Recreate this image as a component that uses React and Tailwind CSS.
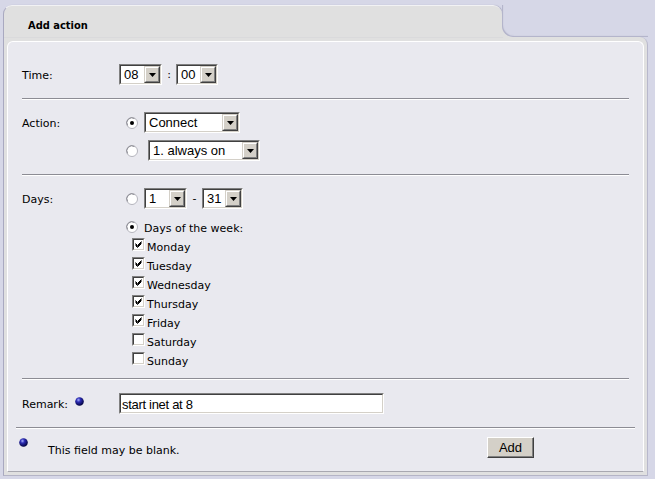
import React from 'react';

const label = "font-['DejaVu_Sans',Verdana,sans-serif] text-[11px] text-black";
const arial = "font-['Liberation_Sans',Arial,sans-serif] text-[13px] text-black";

// classic win98 drop-down arrow button
function ArrowButton() {
  return (
    <div className="flex h-[17px] w-[16px] border border-t-[#d4d0c8] border-l-[#d4d0c8] border-b-[#404040] border-r-[#404040]">
      <div className="flex flex-1 items-center justify-center bg-[#d4d0c8] border border-t-white border-l-white border-b-[#808080] border-r-[#808080]">
        <svg width="7" height="4" viewBox="0 0 7 4">
          <polygon points="0,0 7,0 3.5,4" fill="#000" />
        </svg>
      </div>
    </div>
  );
}

function Select({ value, w }) {
  return (
    <div className={`flex h-[21px] ${w} border border-t-[#808080] border-l-[#808080] border-b-white border-r-white`}>
      <div className="flex flex-1 bg-white border border-t-[#404040] border-l-[#404040] border-b-[#d4d0c8] border-r-[#d4d0c8]">
        <span className={`${arial} flex-1 pl-[3px] leading-[17px] whitespace-nowrap overflow-hidden`}>{value}</span>
        <ArrowButton />
      </div>
    </div>
  );
}

function Radio({ checked }) {
  return (
    <svg width="12" height="12" viewBox="0 0 12 12" className="shrink-0">
      <circle cx="6" cy="6" r="5.5" fill="#fff" stroke="#b4b4bc" strokeWidth="1" />
      <path d="M1.6 8.5 A5 5 0 0 1 8.5 1.6" fill="none" stroke="#8a8a92" strokeWidth="1" />
      {checked && <circle cx="6" cy="6" r="2" fill="#000" />}
    </svg>
  );
}

function Checkbox({ checked }) {
  return (
    <div className="h-[13px] w-[13px] shrink-0 border border-t-[#808080] border-l-[#808080] border-b-white border-r-white">
      <div className="h-full w-full bg-white border border-t-[#404040] border-l-[#404040] border-b-[#d4d0c8] border-r-[#d4d0c8]">
        {checked && (
          <svg width="9" height="9" viewBox="0 0 9 9" className="block">
            <path d="M1.5 3.5 L3.5 5.5 L7.5 1.5 M1.5 4.5 L3.5 6.5 L7.5 2.5 M1.5 5.5 L3.5 7.5 L7.5 3.5" fill="none" stroke="#000" strokeWidth="1" />
          </svg>
        )}
      </div>
    </div>
  );
}

function Bullet() {
  return (
    <svg width="9" height="9" viewBox="0 0 9 9" className="block shrink-0">
      <defs>
        <radialGradient id="ball" cx="38%" cy="32%" r="70%">
          <stop offset="0" stopColor="#a8b0ff" />
          <stop offset="0.35" stopColor="#2c2cb4" />
          <stop offset="1" stopColor="#00003a" />
        </radialGradient>
      </defs>
      <circle cx="4.5" cy="4.5" r="4.3" fill="url(#ball)" />
    </svg>
  );
}

function Rule({ wide }) {
  return <div className={`h-[2px] border-t border-t-[#8c8c94] border-b border-b-white ${wide ? 'mx-[-6px]' : ''}`} />;
}

const days = [
  ['Monday', true],
  ['Tuesday', true],
  ['Wednesday', true],
  ['Thursday', true],
  ['Friday', true],
  ['Saturday', false],
  ['Sunday', false],
];

export default function App() {
  return (
    <div className="w-[655px] h-[479px] overflow-hidden bg-[#d6d7e7] pt-[5px] pl-[3px]">
      <div className="w-[645px]">
        {/* ── Tab ─────────────────────────────────────── */}
        <div className="flex h-[32px]">
          <div className="w-[499px] rounded-t-[9px] bg-[#e0e0e0] border-t border-l border-t-[#f2f2f4] border-l-[#a9a9c0] shadow-[1px_0_1px_rgba(140,140,170,0.6)] pl-[24px] pt-[10px] leading-[14px]">
            <span className="font-['DejaVu_Sans_Condensed','DejaVu_Sans',sans-serif] text-[11px] font-bold leading-[14px] text-black">Add action</span>
          </div>
          <div className="flex-1 bg-[#e0e0e0]">
            <div className="h-full rounded-bl-[11px] bg-[#d6d7e7] shadow-[inset_1px_-1px_1px_rgba(140,140,170,0.5)]" />
          </div>
        </div>

        {/* ── Body ────────────────────────────────────── */}
        <div className="rounded-tr-[8px] bg-[#e0e0e0] border-l border-b border-r border-l-[#a9a9c0] border-b-[#b4b4c6] border-r-[#b8b8cc] px-[3px] pt-[4px] pb-[3px]">
          <div className="rounded-t-[6px] bg-[#e9e9ef] border-t border-l border-r border-t-white border-l-white border-r-white border-b border-b-[#a8a8b0] px-[14px] leading-[14px]">
            {/* Time */}
            <div className="flex pt-[22px] pb-[13px]">
              <div className={`${label} w-[97px] h-[21px] flex items-center pt-[2px]`}>Time:</div>
              <div className="flex items-center">
                <Select value="08" w="w-[43px]" />
                <span className={`${label} w-[14px] text-center`}>:</span>
                <Select value="00" w="w-[42px]" />
              </div>
            </div>
            <Rule />

            {/* Action */}
            <div className="flex pt-[12px] pb-[13px]">
              <div className={`${label} w-[97px] h-[21px] flex items-center pt-[2px]`}>Action:</div>
              <div className="flex flex-col gap-[7px]">
                <div className="flex items-center pl-[7px]">
                  <Radio checked />
                  <div className="ml-[6px]"><Select value="Connect" w="w-[96px]" /></div>
                </div>
                <div className="flex items-center pl-[7px]">
                  <Radio />
                  <div className="ml-[10px]"><Select value="1. always on" w="w-[112px]" /></div>
                </div>
              </div>
            </div>
            <Rule />

            {/* Days */}
            <div className="flex pt-[12px] pb-[8px]">
              <div className={`${label} w-[97px] h-[21px] flex items-center pt-[2px]`}>Days:</div>
              <div className="flex flex-col">
                <div className="flex items-center pl-[7px]">
                  <Radio />
                  <div className="ml-[6px]"><Select value="1" w="w-[43px]" /></div>
                  <span className={`${label} w-[15px] text-center`}>-</span>
                  <Select value="31" w="w-[41px]" />
                </div>
                <div className="flex items-center h-[20px] mt-[8px] pl-[7px]">
                  <Radio checked />
                  <span className={`${label} ml-[6px] leading-[14px] pt-[3px]`}>Days of the week:</span>
                </div>
                {days.map(([d, on]) => (
                  <div key={d} className="flex h-[19px] pl-[13px]">
                    <div className="mt-[1px]"><Checkbox checked={on} /></div>
                    <span className={`${label} ml-[2px] leading-[19px] pt-[1px]`}>{d}</span>
                  </div>
                ))}
              </div>
            </div>
            <Rule />

            {/* Remark */}
            <div className="flex pt-[13px] pb-[13px]">
              <div className={`${label} w-[97px] h-[21px] flex items-center pt-[2px]`}>
                Remark:
                <span className="ml-[7px] mt-[-6px]"><Bullet /></span>
              </div>
              <div className="h-[21px] w-[265px] border border-t-[#808080] border-l-[#808080] border-b-white border-r-white">
                <div className="h-full bg-white border border-t-[#404040] border-l-[#404040] border-b-[#d4d0c8] border-r-[#d4d0c8] leading-[17px]">
                  <span className={`${arial} pl-[1px] leading-[17px] tracking-[-0.3px]`}>start inet at 8</span>
                </div>
              </div>
            </div>
            <Rule wide />

            {/* Footer */}
            <div className="flex h-[42px] ml-[-3px]">
              <div className="mt-[9px]"><Bullet /></div>
              <div className="w-[459px] shrink-0 pl-[20px] pt-[12px]">
                <span className={`${label} leading-[14px]`}>This field may be blank.</span>
              </div>
              <button className={`${arial} shrink-0 mt-[8px] h-[21px] w-[47px] bg-[#d4d0c8] border border-t-white border-l-white border-b-[#404040] border-r-[#404040] shadow-[inset_-1px_-1px_0_#808080] leading-[17px]`}>
                Add
              </button>
            </div>
          </div>
        </div>
      </div>
    </div>
  );
}
